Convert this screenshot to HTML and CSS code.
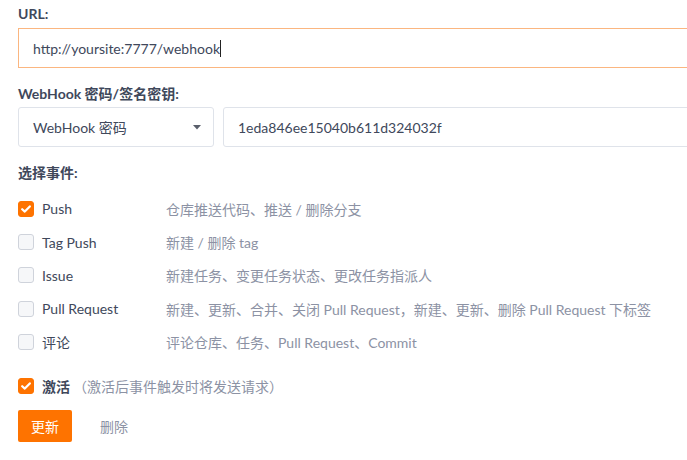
FILE: index.html
```html
<!DOCTYPE html>
<html lang="zh">
<head>
<meta charset="utf-8">
<link rel="stylesheet" href="styles.css">
</head>
<body>
<div class="form">
  <div class="label first">URL:</div>
  <div class="input focused">http://yoursite:7777/webhook<span class="cursor"></span></div>

  <div class="label">WebHook 密码/签名密钥:</div>
  <div class="row">
    <div class="select">
      <span>WebHook 密码</span>
      <svg class="caret" width="8" height="5" viewBox="0 0 8 5"><path d="M0 0h8L4 4.5z" fill="#5a5f6b"/></svg>
    </div>
    <div class="input secret">1eda846ee15040b611d324032f</div>
  </div>

  <div class="label events-label">选择事件:</div>
  <div class="events">
    <div class="event">
      <span class="cb checked"><svg width="10" height="8" viewBox="0 0 10 8"><path d="M1.2 4.2l2.6 2.4L8.8 1.4" fill="none" stroke="#fff" stroke-width="2.2" stroke-linecap="round" stroke-linejoin="round"/></svg></span>
      <span class="name">Push</span>
      <span class="desc">仓库推送代码、推送 / 删除分支</span>
    </div>
    <div class="event">
      <span class="cb"></span>
      <span class="name">Tag Push</span>
      <span class="desc">新建 / 删除 tag</span>
    </div>
    <div class="event">
      <span class="cb"></span>
      <span class="name">Issue</span>
      <span class="desc">新建任务、变更任务状态、更改任务指派人</span>
    </div>
    <div class="event">
      <span class="cb"></span>
      <span class="name">Pull Request</span>
      <span class="desc">新建、更新、合并、关闭 Pull Request，新建、更新、删除 Pull Request 下标签</span>
    </div>
    <div class="event">
      <span class="cb"></span>
      <span class="name">评论</span>
      <span class="desc">评论仓库、任务、Pull Request、Commit</span>
    </div>
  </div>

  <div class="active">
    <span class="cb checked"><svg width="10" height="8" viewBox="0 0 10 8"><path d="M1.2 4.2l2.6 2.4L8.8 1.4" fill="none" stroke="#fff" stroke-width="2.2" stroke-linecap="round" stroke-linejoin="round"/></svg></span>
    <span class="active-name">激活</span>
    <span class="active-hint">（激活后事件触发时将发送请求）</span>
  </div>

  <div class="actions">
    <button class="btn primary">更新</button>
    <button class="btn link">删除</button>
  </div>
</div>
</body>
</html>
```

FILE: styles.css
```css
html, body {
  margin: 0;
  padding: 0;
  background: #fff;
  overflow: hidden;
}
body {
  font-family: Lato, "Noto Sans CJK SC", sans-serif;
  font-size: 14px;
  color: #40485b;
}
.form {
  padding-left: 18px;
  width: 720px;
  display: flex;
  flex-direction: column;
}
.label {
  font-weight: bold;
  font-size: 14px;
  line-height: 20px;
  margin-top: 16px;
  margin-bottom: 3px;
  color: #40485b;
}
.label.first {
  margin-top: 4px;
  margin-bottom: 4px;
}
.input {
  box-sizing: border-box;
  height: 40px;
  border: 1px solid #dfe3ea;
  border-radius: 3px;
  padding: 0 14px;
  display: flex;
  align-items: center;
  color: #40485b;
  background: #fff;
}
.input.focused {
  border-color: #fbb680;
  border-radius: 0;
}
.cursor {
  display: inline-block;
  width: 1px;
  height: 17px;
  background: #222;
}
.row {
  display: flex;
  gap: 9px;
}
.select {
  box-sizing: border-box;
  width: 196px;
  height: 40px;
  border: 1px solid #dfe3ea;
  border-radius: 3px;
  padding: 0 12px 0 14px;
  display: flex;
  align-items: center;
  justify-content: space-between;
}
.secret {
  flex: 1;
}
.events-label {
  margin-top: 16px;
  margin-bottom: 9px;
}
.events {
  display: flex;
  flex-direction: column;
}
.event {
  height: 33.4px;
  display: flex;
  align-items: center;
}
.cb {
  box-sizing: border-box;
  width: 16px;
  height: 16px;
  border: 1px solid #cfd3db;
  border-radius: 3px;
  background: #f6f7f9;
  display: flex;
  align-items: center;
  justify-content: center;
  flex: none;
}
.cb.checked {
  background: #fe7300;
  border-color: #fe7300;
}
.name {
  width: 124px;
  margin-left: 8px;
  color: #40485b;
}
.desc {
  color: #8c92a4;
}
.active {
  display: flex;
  align-items: center;
  height: 34px;
  margin-top: 10px;
}
.active-name {
  margin-left: 8px;
  font-weight: bold;
  color: #40485b;
}
.active-hint {
  margin-left: 3px;
  color: #8c92a4;
}
.actions {
  display: flex;
  align-items: center;
  margin-top: 7px;
}
.btn {
  font-family: inherit;
  font-size: 14px;
  border: none;
  height: 32px;
  border-radius: 2px;
  cursor: pointer;
}
.btn.primary {
  width: 54px;
  background: #fe7300;
  color: #fff;
}
.btn.link {
  background: transparent;
  color: #8c92a4;
  margin-left: 12px;
  padding: 0 16px;
}
```
